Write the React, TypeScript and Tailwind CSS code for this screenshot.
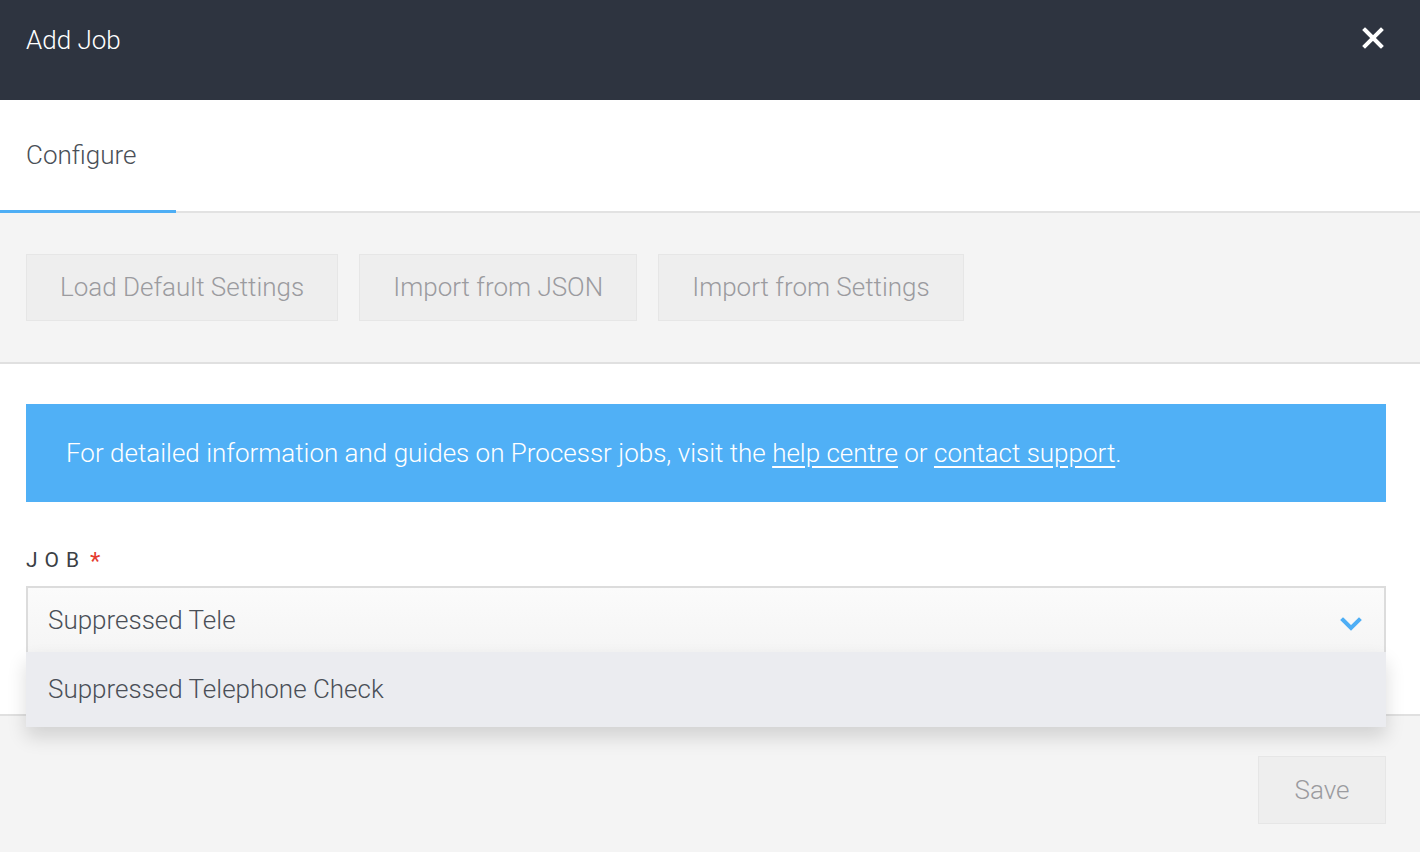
import React from 'react'

const font = { fontFamily: 'Roboto, "Liberation Sans", sans-serif' }

function CloseIcon() {
  return (
    <svg width="22" height="22" viewBox="0 0 22 22" fill="none">
      <path d="M3 3L19 19M19 3L3 19" stroke="white" strokeWidth="4" strokeLinecap="square" />
    </svg>
  )
}

function Chevron() {
  return (
    <svg width="22" height="14" viewBox="0 0 22 14" fill="none">
      <path d="M3 3L11 11L19 3" stroke="#4eaef5" strokeWidth="4" strokeLinecap="square" />
    </svg>
  )
}

export default function App() {
  const toolbarButtons = ['Load Default Settings', 'Import from JSON', 'Import from Settings']

  return (
    <div className="w-[1420px] h-[852px] flex flex-col bg-[#f4f4f4] overflow-hidden font-light" style={font}>
      {/* Header */}
      <header className="h-[100px] shrink-0 bg-[#2e3440] flex items-start justify-between pl-[26px] pr-[36px] pt-[24px]">
        <h1 className="text-[26px] leading-[32px] text-white">Add Job</h1>
        <button className="mt-[3px]">
          <CloseIcon />
        </button>
      </header>

      {/* Tabs */}
      <div className="h-[113px] shrink-0 bg-white border-b-2 border-[#e2e2e2] flex">
        <div className="w-[176px] h-[113px] border-b-[3px] border-[#4eaef5] flex items-center pl-[26px]">
          <span className="text-[26px] text-[#4a4f57]">Configure</span>
        </div>
      </div>

      {/* Toolbar */}
      <div className="shrink-0 bg-[#f4f4f4] border-b-2 border-[#e0e0e0] px-[26px] py-[41px] flex gap-[21px]">
        {toolbarButtons.map((label) => (
          <button
            key={label}
            className="h-[67px] px-[33px] bg-[#eeeeee] border border-[#e6e6e6] text-[26px] text-[#9b9b9f]"
          >
            {label}
          </button>
        ))}
      </div>

      {/* Content */}
      <main className="h-[350px] shrink-0 bg-white pl-[26px] pr-[34px] pt-[40px] relative z-10">
        <div className="h-[98px] bg-[#50b0f6] flex items-center px-[40px] text-[26px] text-white">
          <p>
            For detailed information and guides on Processr jobs, visit the{' '}
            <a href="#" className="underline underline-offset-[4px]">help centre</a> or{' '}
            <a href="#" className="underline underline-offset-[4px]">contact support</a>.
          </p>
        </div>

        <div className="mt-[46px] h-[24px] flex items-center text-[21px] leading-[24px] text-[#3b3f45] font-normal">
          <span className="tracking-[0.33em]">JOB</span>
          <span className="text-[#e53b2f] text-[24px] ml-[4px] mt-[2px]">*</span>
        </div>

        <div className="relative mt-[14px]">
          <div className="h-[66px] border-2 border-b-0 border-[#dcdcdc] bg-gradient-to-b from-[#fbfbfb] to-[#f5f5f5] flex items-center justify-between pl-[20px] pr-[22px]">
            <span className="text-[26px] text-[#4a4f57]">Suppressed Tele</span>
            <span className="mt-[8px]">
              <Chevron />
            </span>
          </div>
          <div className="absolute left-0 right-0 top-[66px] h-[75px] bg-[#ebecf0] flex items-center pl-[22px] shadow-[0_10px_18px_rgba(0,0,0,0.14)]">
            <span className="text-[26px] text-[#4a4f57]">Suppressed Telephone Check</span>
          </div>
        </div>
      </main>

      {/* Footer */}
      <footer className="flex-1 bg-[#f4f4f4] border-t-2 border-[#e0e0e0] flex justify-end pt-[40px] pr-[34px]">
        <button className="h-[68px] w-[128px] bg-[#eeeeee] border border-[#e6e6e6] text-[26px] text-[#9b9b9f]">
          Save
        </button>
      </footer>
    </div>
  )
}
